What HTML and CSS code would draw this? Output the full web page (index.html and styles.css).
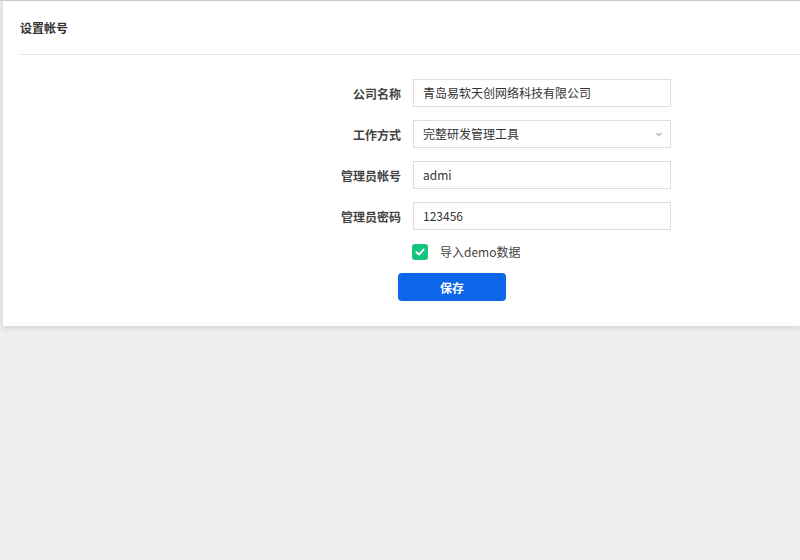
FILE: index.html
```html
<!DOCTYPE html>
<html>
<head>
<meta charset="utf-8">
<link rel="stylesheet" href="styles.css">
</head>
<body>
<div class="card">
  <div class="header">设置帐号</div>
  <div class="form">
    <div class="row">
      <label class="label">公司名称</label>
      <div class="input">青岛易软天创网络科技有限公司</div>
    </div>
    <div class="row">
      <label class="label">工作方式</label>
      <div class="input select">完整研发管理工具<span class="caret"></span></div>
    </div>
    <div class="row">
      <label class="label">管理员帐号</label>
      <div class="input">admi</div>
    </div>
    <div class="row">
      <label class="label">管理员密码</label>
      <div class="input">123456</div>
    </div>
    <div class="check-row">
      <span class="checkbox"><svg width="12" height="12" viewBox="0 0 12 12"><path d="M2.5 6.2 L5 8.6 L9.6 3.6" fill="none" stroke="#fff" stroke-width="2" stroke-linecap="round" stroke-linejoin="round"/></svg></span>
      <span class="check-text">导入demo数据</span>
    </div>
    <div class="btn-row">
      <button class="btn">保存</button>
    </div>
  </div>
</div>
</body>
</html>
```
FILE: styles.css
```css
html, body { margin: 0; padding: 0; }
body {
  background: #efefef;
  font-family: "Noto Sans CJK SC", "Noto Sans", sans-serif;
  width: 800px;
  height: 560px;
  overflow: hidden;
  border-top: 1px solid #c8c8c8;
  box-sizing: border-box;
}
.card {
  background: #fff;
  margin-left: 2px;
  height: 325px;
  box-shadow: 0 2px 6px rgba(0,0,0,0.12);
  border-left: 1px solid #e0e0e0;
  box-sizing: border-box;
  padding: 0 0 0 17px;
}
.header {
  font-size: 12px;
  font-weight: bold;
  color: #333;
  height: 53px;
  line-height: 54px;
  border-bottom: 1px solid #e5e5e5;
}
.form {
  display: flex;
  flex-direction: column;
  padding-top: 24px;
}
.row {
  display: flex;
  align-items: center;
  height: 28px;
  margin-bottom: 13px;
}
.label {
  width: 381px;
  text-align: right;
  font-size: 12px;
  font-weight: bold;
  color: #444;
  padding-right: 12px;
}
.input {
  width: 258px;
  height: 28px;
  box-sizing: border-box;
  border: 1px solid #ddd;
  font-size: 12px;
  color: #333;
  padding-left: 9px;
  line-height: 26px;
  position: relative;
}
.caret {
  position: absolute;
  right: 7px;
  top: 12px;
  width: 0; height: 0;
  border-left: 4px solid transparent;
  border-right: 4px solid transparent;
  border-top: 4px solid #ccc;
}
.check-row {
  display: flex;
  align-items: center;
  margin-left: 392px;
  margin-top: 0;
  height: 17px;
}
.checkbox {
  width: 16px; height: 16px;
  background: #15c47d;
  border-radius: 3px;
  display: flex;
  align-items: center;
  justify-content: center;
}
.check-text {
  margin-left: 12px;
  font-size: 12px;
  color: #444;
}
.btn-row { margin-left: 378px; margin-top: 13px; }
.btn {
  width: 108px;
  height: 28px;
  background: #0b66ea;
  border: none;
  border-radius: 4px;
  color: #fff;
  font-family: inherit;
  font-weight: bold;
  font-size: 12px;
}
```
